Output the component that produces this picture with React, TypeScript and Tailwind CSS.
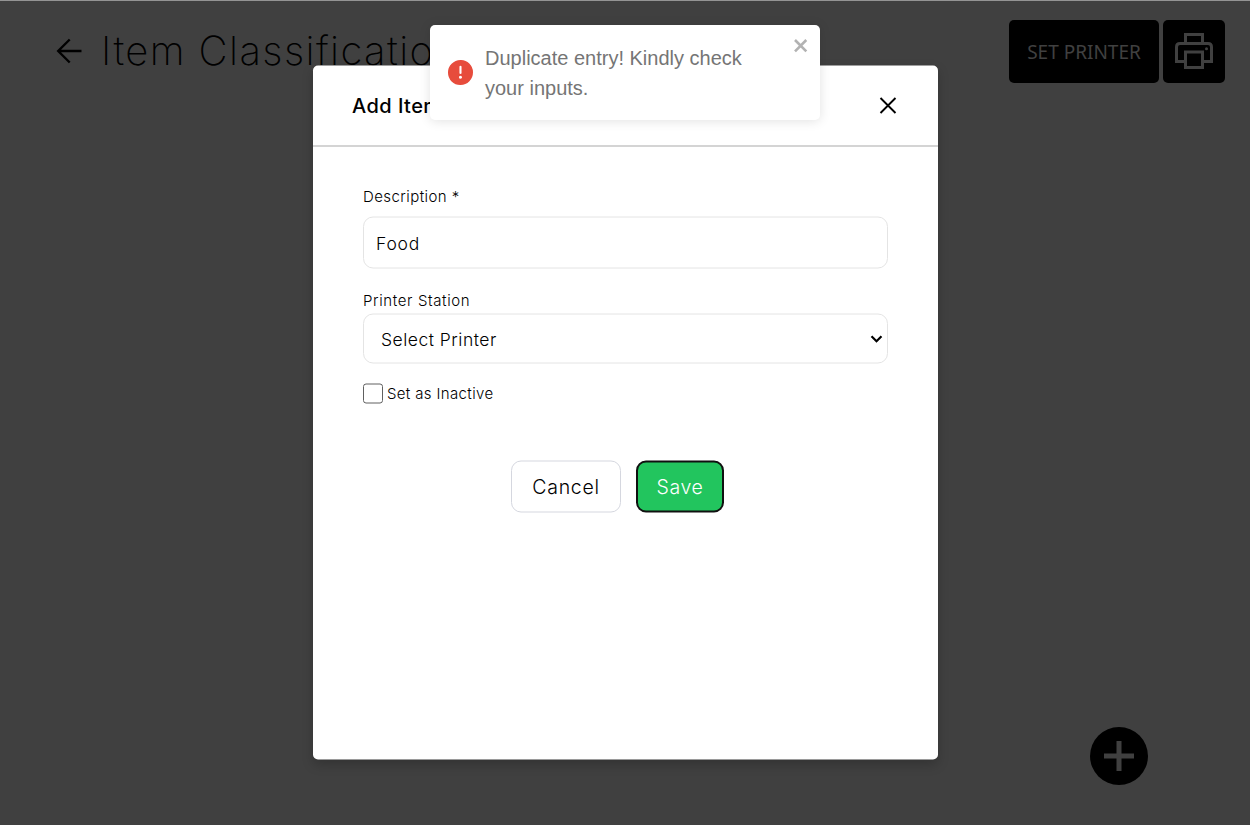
import { useState } from "react";

function PageHeader() {
  return (
    <header className="flex h-[83px] items-start justify-between border-t border-[#949494] pl-[55px] pr-[25px] pt-[19px]">
      <div className="flex h-[62px] items-center">
        <svg className="h-[28px] w-[28px]" viewBox="0 0 28 28" fill="none" stroke="black" strokeWidth="2.4">
          <path d="M26.5 14H3.2M14.7 2.5L3.2 14l11.5 11.5" />
        </svg>
        <h1 className="ml-[18px] whitespace-nowrap text-[40px] font-extralight leading-[50px] tracking-[1.4px] text-black">
          Item Classification
        </h1>
      </div>
      <div className="flex gap-1">
        <button className="h-[63px] w-[150px] rounded-[5px] bg-black pt-[2px] font-['Noto_Sans',sans-serif] text-[19px] text-[#404040]">
          SET PRINTER
        </button>
        <button className="flex h-[63px] w-[62px] items-center justify-center rounded-[5px] bg-black" aria-label="Print">
          <svg className="mb-[2px] h-[38px] w-[38px]" viewBox="0 0 38 38" fill="none" stroke="#404040" strokeWidth="3">
            <path d="M10.5 12V2.5h17V12" />
            <path d="M10.5 29.5h-9V15q0-3.5 3.5-3.5h28q3.5 0 3.5 3.5v14.5h-9" />
            <path d="M10.5 19.9h17v15.6h-17z" />
            <circle cx="31.5" cy="16.8" r="1.5" fill="#404040" stroke="none" />
          </svg>
        </button>
      </div>
    </header>
  );
}

function Toast() {
  return (
    <div
      role="alert"
      className="absolute left-[430px] top-[25px] z-20 flex h-[95px] w-[390px] items-center rounded-[5px] bg-white pl-[18px] shadow-[0_1px_12px_rgba(0,0,0,0.12)]"
    >
      <svg className="h-[25px] w-[25px] shrink-0" viewBox="0 0 24 24" fill="#e74c3c">
        <path d="M11.983 0a12.206 12.206 0 00-8.51 3.653A11.8 11.8 0 000 12.207 11.779 11.779 0 0011.8 24h.214A12.111 12.111 0 0024 11.791 11.766 11.766 0 0011.983 0zM10.5 16.542a1.476 1.476 0 011.449-1.53h.027a1.527 1.527 0 011.523 1.47 1.475 1.475 0 01-1.449 1.53h-.027a1.529 1.529 0 01-1.523-1.47zM11 12.5v-6a1 1 0 012 0v6a1 1 0 11-2 0z" />
      </svg>
      <p className="ml-3 w-[280px] font-['Liberation_Sans',sans-serif] text-[20px] leading-[30px] text-[#757575]">
        Duplicate entry! Kindly check your inputs.
      </p>
      <button aria-label="Dismiss" className="ml-[28px] mb-[55px]">
        <svg className="h-[15px] w-[15px]" viewBox="0 0 15 15" stroke="#b2b2b2" strokeWidth="2.6">
          <path d="M2 2l11.3 11.3M13.3 2L2 13.3" />
        </svg>
      </button>
    </div>
  );
}

function ItemDialog() {
  const [description, setDescription] = useState("Food");
  return (
    <section
      role="dialog"
      className="absolute left-[313px] top-[66px] z-10 flex h-[694px] w-[625px] -translate-y-[0.5px] flex-col rounded-[5px] bg-white text-black shadow-[0_5px_12px_rgba(0,0,0,0.2)]"
    >
      <div className="flex h-[81px] translate-y-[0.5px] items-center justify-between border-b-2 border-[#d4d4d4] pl-[39px] pr-[41px]">
        <h2 className="whitespace-nowrap text-[20px] font-medium tracking-[0.45px]">Add Item Classification</h2>
        <button aria-label="Close">
          <svg className="h-[18px] w-[18px]" viewBox="0 0 18 18" stroke="black" strokeWidth="1.9">
            <path d="M1.5 1l15 15M16.5 1l-15 15" />
          </svg>
        </button>
      </div>
      <form className="flex flex-col px-[50px] pt-[38px] font-light" onSubmit={(e) => e.preventDefault()}>
        <label htmlFor="description" className="h-[32px] text-[15px] leading-[24px] tracking-[0.42px]">
          Description *
        </label>
        <input
          id="description"
          value={description}
          onChange={(e) => setDescription(e.target.value)}
          className="h-[52px] rounded-[10px] border border-[#e4e4e4] px-[12px] pt-[1px] text-[17.5px] tracking-[0.8px] outline-none"
        />
        <label htmlFor="printer" className="mt-[20px] h-[25px] text-[15px] leading-[24px] tracking-[0.62px]">
          Printer Station
        </label>
        <div className="relative flex">
          <select
            id="printer"
            className="h-[50px] w-full appearance-none rounded-[10px] border border-[#e4e4e4] bg-white pl-[17px] pt-[2px] text-[17.5px] tracking-[0.5px]"
          >
            <option>Select Printer</option>
          </select>
          <svg className="pointer-events-none absolute right-[5.5px] top-[21px] h-[9px] w-[13px]" viewBox="0 0 13 9" fill="none" stroke="black" strokeWidth="2.2">
            <path d="M1.5 1.7l5 5 5-5" />
          </svg>
        </div>
        <label className="mt-[18px] flex h-[24px] items-center gap-[4px] text-[15px] tracking-[0.35px]">
          <input type="checkbox" className="h-[20px] w-[20px] appearance-none rounded-[3px] border border-[#606060] bg-white" />
          Set as Inactive
        </label>
        <div className="mt-[55px] flex gap-[15px] pl-[148px]">
          <button type="button" className="h-[52px] w-[110px] rounded-[10px] border border-[#d5d7df] pt-[2px] text-[19.5px] tracking-[0.7px]">
            Cancel
          </button>
          <button type="submit" className="h-[52px] w-[88px] rounded-[10px] border-2 border-[#101010] bg-[#22c55e] pt-[2px] text-[19.5px] tracking-[0.6px] text-white">
            Save
          </button>
        </div>
      </form>
    </section>
  );
}

export default function App() {
  return (
    <main className="relative flex h-[825px] w-[1250px] flex-col justify-between overflow-hidden bg-[#404040] font-['Inter',sans-serif]">
      <PageHeader />
      <div className="flex justify-end pb-[40px] pr-[102px]">
        <button aria-label="Add" className="flex h-[58px] w-[58px] items-center justify-center rounded-full bg-black">
          <svg className="h-[30px] w-[30px]" viewBox="0 0 30 30" stroke="#404040" strokeWidth="5">
            <path d="M15 0v30M0 15h30" />
          </svg>
        </button>
      </div>
      <ItemDialog />
      <Toast />
    </main>
  );
}
